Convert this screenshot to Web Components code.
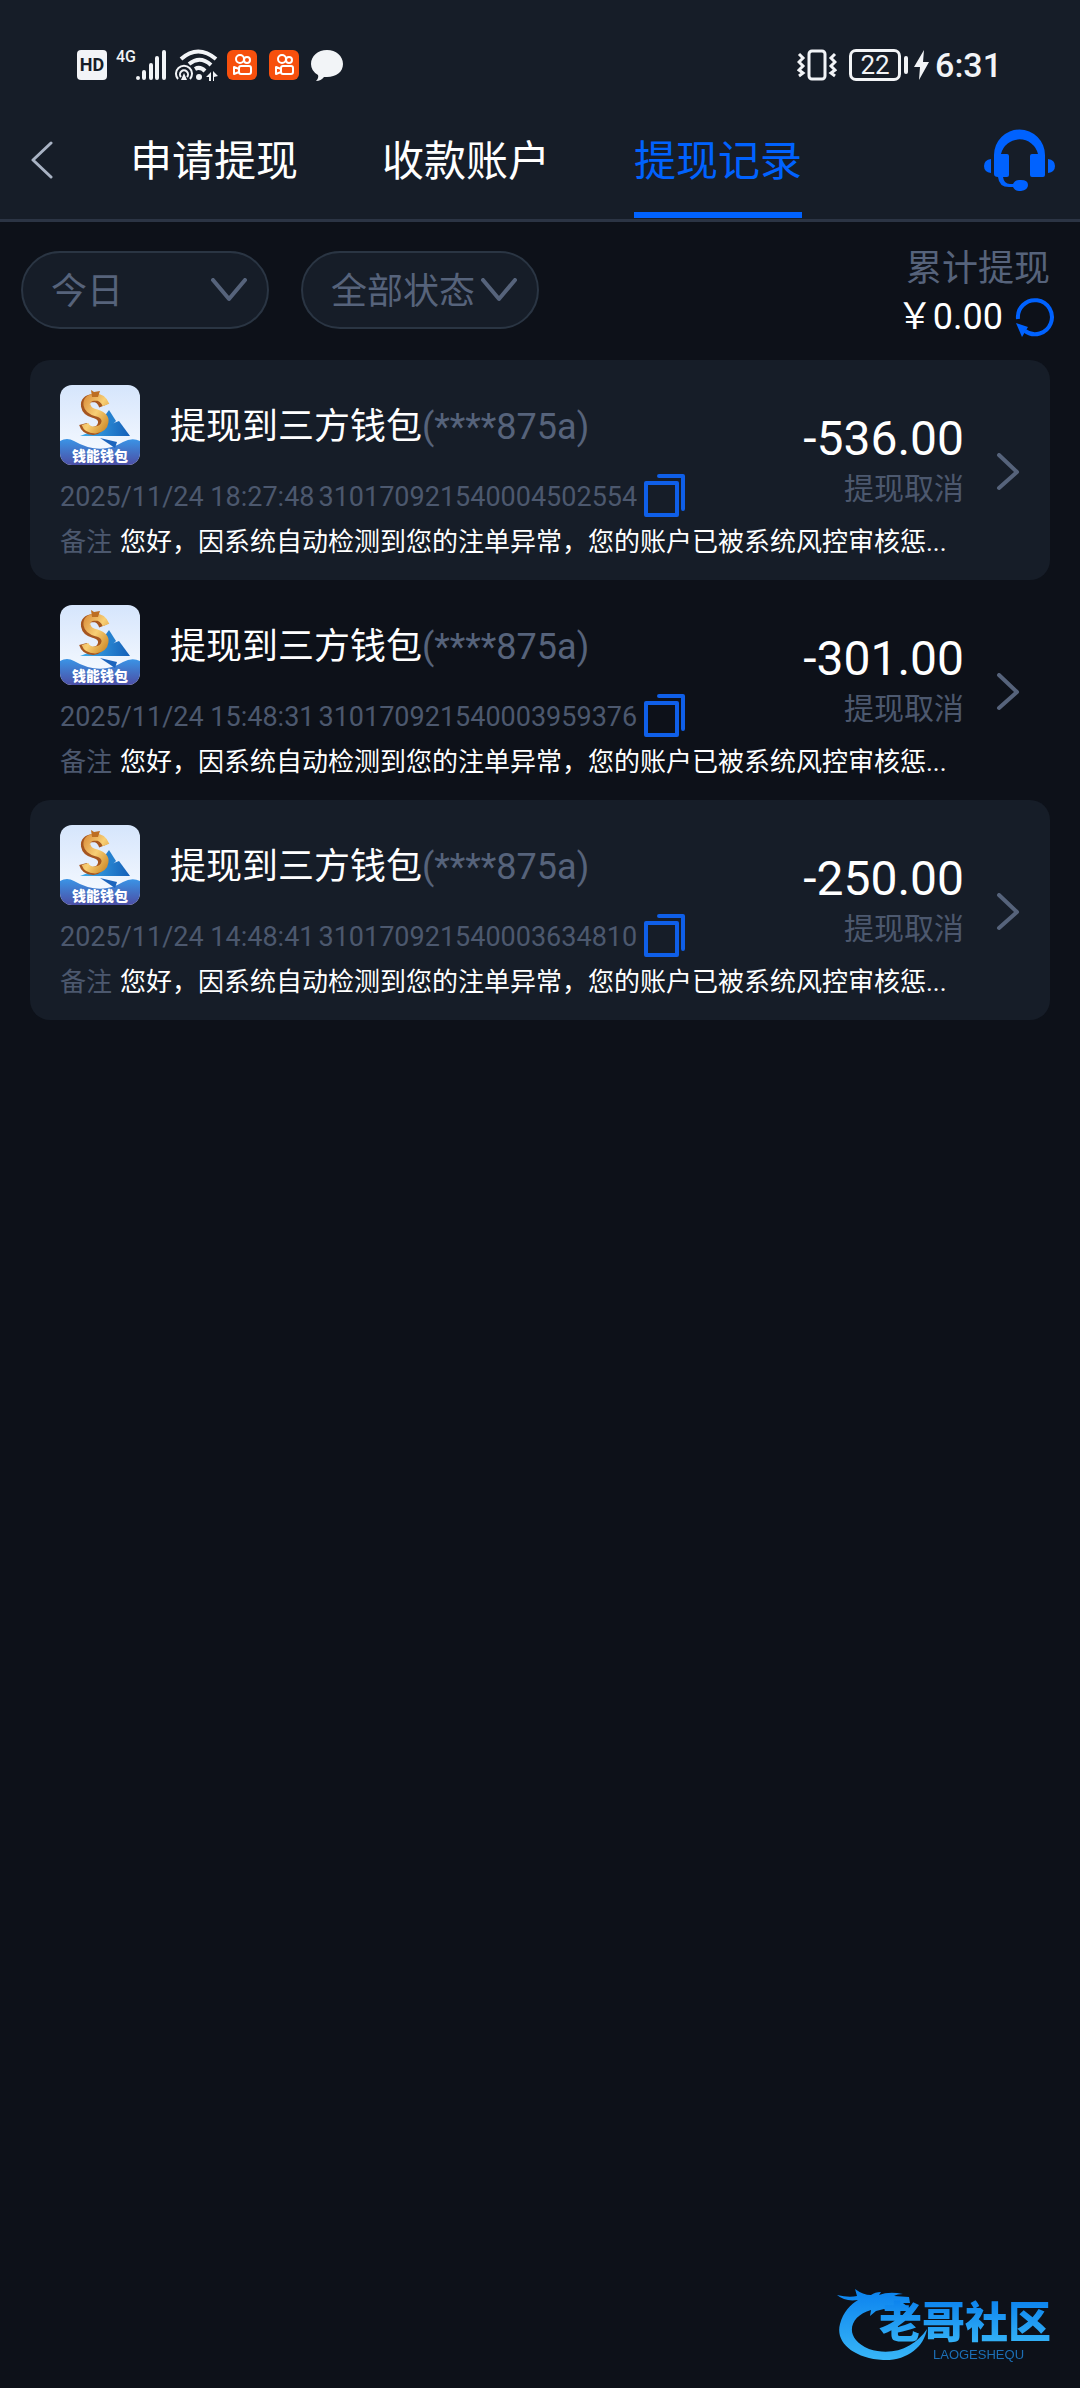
<!DOCTYPE html>
<html lang="zh-CN">
<head>
<meta charset="UTF-8">
<meta name="viewport" content="width=device-width, initial-scale=1.0">
<title>提现记录</title>
<style>
  :root {
    --bg: #0d1119;
    --panel: #161d28;
    --line: #2b3444;
    --muted: #56637b;
    --dim: #4c586e;
    --primary: #0062ff;
  }
  body {
    margin: 0;
    min-height: 100vh;
    background: var(--bg);
    color: #fff;
    font-family: Roboto, "Noto Sans CJK SC", sans-serif;
  }
</style>
</head>
<body>
<withdraw-page></withdraw-page>

<script>
// 手机状态栏
class StatusBar extends HTMLElement {
  constructor() {
    super();
    const shadowRoot = this.attachShadow({ mode: "open" });

    const styles = `
      :host {
        display: flex;
        justify-content: space-between;
        align-items: center;
        height: 34px;
        padding: 48px 78px 22px 77px;
        color: #f2f4f7;
      }
      .group, .apps { display: flex; align-items: center; }
      .group { gap: 9px; }
      .apps { gap: 12px; }
      .right { gap: 6px; }
      .hd {
        width: 30px;
        height: 30px;
        border-radius: 4px;
        background: #f2f4f7;
        color: var(--panel);
        font-size: 18px;
        font-weight: 700;
        line-height: 30px;
        text-align: center;
      }
      .signal { display: flex; align-items: flex-start; }
      .net { font-size: 16px; line-height: 16px; font-weight: 500; }
      .power { display: flex; align-items: center; gap: 3px; margin-left: 6px; }
      .battery {
        width: 46px;
        height: 26px;
        border: 3px solid #f2f4f7;
        border-radius: 7px;
        font-size: 26px;
        line-height: 26px;
        text-align: center;
      }
      .nub { width: 4px; height: 18px; border-radius: 2px; background: #f2f4f7; }
      .time { font-size: 34px; line-height: 34px; font-weight: 500; }
      svg { display: block; }
    `;

    // 快手图标出现两次
    const kuai = `
      <svg width="30" height="30" viewBox="0 0 30 30">
        <rect width="30" height="30" rx="6" fill="#f7500d"/>
        <g fill="none" stroke="#fff" stroke-width="2" stroke-linejoin="round">
          <circle cx="13" cy="9" r="4"/>
          <circle cx="20" cy="10" r="3"/>
          <rect x="12" y="16" width="12" height="8" rx="2"/>
          <path d="M12 19 7 17v7l5-2"/>
        </g>
      </svg>`;

    shadowRoot.innerHTML = `
      <style>${styles}</style>
      <div class="group">
        <span class="hd">HD</span>
        <div class="signal">
          <span class="net">4G</span>
          <svg width="30" height="32" viewBox="2 0 30 32" stroke="#f2f4f7" stroke-width="4" stroke-linecap="round">
            <path d="M4 29v0M10 23v6M17 16v13M23 9v20M30 3v26"/>
          </svg>
        </div>
        <svg width="43" height="32" viewBox="0 0 43 32" fill="none" stroke="#f2f4f7">
          <g stroke-width="4">
            <path d="M6 10Q23-5 41 10"/>
            <path d="M14 15Q25 6 36 16"/>
            <path d="M20 20q5-3 10 2" />
          </g>
          <circle cx="24" cy="28" r="3" fill="#f2f4f7" stroke="none"/>
          <g stroke-width="2">
            <path d="M3 30a8 8 0 1 1 12 0"/>
            <path d="M6 28a4 4 0 1 1 6 0"/>
          </g>
          <path d="M9 24l3 7H6zM31 28l5-5v9h-2v-4zM38 22v10h1v-4l4-1z" fill="#f2f4f7" stroke="none"/>
        </svg>
        <div class="apps">
          ${kuai}
          ${kuai}
          <svg width="32" height="31" viewBox="0 0 32 31" fill="#f2f4f7">
            <path d="M16 0c9 0 16 6 16 14s-7 13-16 13q-2 0-3 0-3 4-8 4 3-3 2-6Q0 21 0 14C0 6 7 0 16 0z"/>
          </svg>
        </div>
      </div>
      <div class="group right">
        <svg width="40" height="32" viewBox="0 0 40 32" fill="none" stroke="#f2f4f7" stroke-width="3">
          <rect x="12" y="2" width="16" height="28" rx="3"/>
          <path d="M2 5l4 4-4 4 4 4-4 4 4 3-4 3M38 5l-4 4 4 4-4 4 4 4-4 3 4 3"/>
        </svg>
        <div class="power">
          <span class="battery">22</span>
          <span class="nub"></span>
        </div>
        <svg width="15" height="30" viewBox="0 0 15 30" fill="#f2f4f7">
          <path d="M10 0 0 17h6L5 30 15 12H9z"/>
        </svg>
        <span class="time">6:31</span>
      </div>
    `;
  }
}
customElements.define("status-bar", StatusBar);

// 顶部导航：返回、选项卡、客服
class NavBar extends HTMLElement {
  constructor() {
    super();
    const shadowRoot = this.attachShadow({ mode: "open" });

    const styles = `
      :host {
        display: flex;
        align-items: center;
        height: 115px;
        padding: 0 25px 0 30px;
        border-bottom: 3px solid var(--line);
      }
      button { padding: 0 0 3px; border: 0; background: none; cursor: pointer; }
      svg { display: block; }
      nav {
        display: flex;
        flex: 1;
        gap: 84px;
        margin-left: 76px;
      }
    `;

    shadowRoot.innerHTML = `
      <style>${styles}</style>
      <button aria-label="返回">
        <svg width="24" height="38" viewBox="0 0 24 38" fill="none" stroke="#a9b3c4" stroke-width="3" stroke-linecap="round" stroke-linejoin="round">
          <path d="M21 2 3 19l18 17"/>
        </svg>
      </button>
      <nav><slot></slot></nav>
      <button aria-label="客服">
        <svg width="71" height="62" viewBox="0 0 71 62" fill="#0062ff">
          <path d="M10 30V26a25 25 0 0 1 51 0v20q0 2-2 2H48q-2 0-2-2V27q0-2 2-2h6A19 19 0 0 0 17 25h6q2 0 2 2v19q0 2-2 2h-4q1 7 7 7h3q2-4 6-4h2q7 0 7 5t-7 6h-2q-4 0-6-4h-4q-10 0-11-10-4 0-4-3z"/>
          <path d="M7 30v14Q0 43 0 37t7-7zM64 30v14q7-1 7-7t-7-7z"/>
        </svg>
      </button>
    `;
  }
}
customElements.define("nav-bar", NavBar);

class NavTab extends HTMLElement {
  constructor() {
    super();
    const shadowRoot = this.attachShadow({ mode: "open" });

    const styles = `
      :host { display: block; }
      a {
        display: block;
        border: 6px solid transparent;
        border-width: 6px 0;
        color: #fff;
        font-size: 42px;
        line-height: 101px;
        text-decoration: none;
        white-space: nowrap;
      }
      :host([active]) a {
        color: var(--primary);
        border-bottom-color: var(--primary);
      }
    `;

    shadowRoot.innerHTML = `
      <style>${styles}</style>
      <a href="#"><slot></slot></a>
    `;
  }
}
customElements.define("nav-tab", NavTab);

// 下拉筛选
class FilterSelect extends HTMLElement {
  constructor() {
    super();
    const shadowRoot = this.attachShadow({ mode: "open" });

    const styles = `
      :host { display: grid; align-items: center; }
      select {
        grid-area: 1 / 1;
        appearance: none;
        box-sizing: border-box;
        width: 100%;
        height: 78px;
        padding: 3px 56px 0 28px;
        border: 2px solid #2a3543;
        border-radius: 39px;
        background: var(--panel);
        color: var(--muted);
        font: inherit;
        font-size: 36px;
      }
      svg {
        grid-area: 1 / 1;
        justify-self: end;
        margin-right: 21px;
        pointer-events: none;
      }
    `;

    shadowRoot.innerHTML = `
      <style>${styles}</style>
      <select aria-label="${this.getAttribute("label")}">
        <option>${this.getAttribute("value")}</option>
      </select>
      <svg width="38" height="24" viewBox="0 0 38 24" fill="none" stroke="#56637b" stroke-width="4" stroke-linecap="round" stroke-linejoin="round">
        <path d="M3 2l16 19L35 2"/>
      </svg>
    `;
  }
}
customElements.define("filter-select", FilterSelect);

// 筛选栏和累计金额
class FilterBar extends HTMLElement {
  constructor() {
    super();
    const shadowRoot = this.attachShadow({ mode: "open" });

    const styles = `
      :host {
        display: flex;
        align-items: flex-start;
        justify-content: space-between;
        padding: 23px 26px 0 21px;
      }
      .filters {
        display: grid;
        grid-template-columns: 248px 238px;
        gap: 32px;
        padding-top: 6px;
      }
      .total { display: flex; flex-direction: column; align-items: flex-end; }
      .label {
        padding-right: 4px;
        color: var(--muted);
        font-size: 36px;
        line-height: 48px;
      }
      .money {
        display: flex;
        align-items: center;
        gap: 12px;
        font-size: 36px;
        line-height: 48px;
      }
      button { padding: 0; border: 0; background: none; cursor: pointer; }
      svg { display: block; }
    `;

    shadowRoot.innerHTML = `
      <style>${styles}</style>
      <div class="filters"><slot></slot></div>
      <div class="total">
        <span class="label">累计提现</span>
        <div class="money">
          <span>￥0.00</span>
          <button aria-label="刷新">
            <svg width="39" height="39" viewBox="0 0 39 39">
              <path d="M3 21A17 17 0 1 1 10 33" fill="none" stroke="#0062ff" stroke-width="4"/>
              <path d="M1 25l12 4-6 10z" fill="#0062ff"/>
            </svg>
          </button>
        </div>
      </div>
    `;
  }
}
customElements.define("filter-bar", FilterBar);

// 钱包图标
class WalletIcon extends HTMLElement {
  constructor() {
    super();
    const shadowRoot = this.attachShadow({ mode: "open" });

    const styles = `
      :host {
        display: block;
        width: 80px;
        height: 80px;
        border-radius: 12px;
        overflow: hidden;
      }
      svg { display: block; }
      text { font: 900 14px "Noto Sans CJK SC", sans-serif; }
    `;

    shadowRoot.innerHTML = `
      <style>${styles}</style>
      <svg width="80" height="80" viewBox="0 0 80 80">
        <defs>
          <linearGradient id="sky" x1="0" y1="0" x2="0" y2="1">
            <stop offset="0" stop-color="#d5e5fc"/>
            <stop offset="1" stop-color="#fafcff"/>
          </linearGradient>
          <linearGradient id="sea" x1="0" y1="0" x2="0" y2="1">
            <stop offset="0" stop-color="#3a94e6"/>
            <stop offset="1" stop-color="#4c4fa6"/>
          </linearGradient>
          <linearGradient id="gold" x1="0" y1="0" x2="1" y2="1">
            <stop offset="0" stop-color="#dc9340"/>
            <stop offset="0.5" stop-color="#f8cf75"/>
            <stop offset="1" stop-color="#cf8c2b"/>
          </linearGradient>
          <linearGradient id="sail" x1="0" y1="0" x2="1" y2="0">
            <stop offset="0" stop-color="#3fb0ee"/>
            <stop offset="1" stop-color="#1560b8"/>
          </linearGradient>
        </defs>
        <rect width="80" height="80" fill="url(#sky)"/>
        <path d="M49 25l7 11-12 12-10-2z" fill="#2580ce"/>
        <path d="M0 56q7-4 14 0 26 15 49 1 9-5 17-1v24H0z" fill="url(#sea)"/>
        <path d="M20 51 59 36l11 15z" fill="url(#sail)"/>
        <path d="M40 53l17 4-2 6z" fill="#1d65bd"/>
        <g fill="none">
          <path d="M43 21q-3-8-10-8-9 1-8 8 1 6 9 8 9 3 8 9-1 7-9 8-8 0-10-7" stroke="#a65620" stroke-width="8"/>
          <path d="M46 20q-3-8-11-8-9 1-8 8 1 6 10 8 9 3 8 9-1 7-10 8-8 0-10-6" stroke="url(#gold)" stroke-width="7"/>
        </g>
        <path d="M31 5l3 2 6-1-2 6h-6z" fill="#bd6e22"/>
        <text x="12" y="76" fill="#fff">钱能钱包</text>
      </svg>
    `;
  }
}
customElements.define("wallet-icon", WalletIcon);

// 单条提现记录
class RecordItem extends HTMLElement {
  constructor() {
    super();
    const shadowRoot = this.attachShadow({ mode: "open" });

    const styles = `
      :host {
        display: grid;
        grid-template-columns: 1fr auto 24px;
        grid-template-rows: 80px 44px 34px;
        row-gap: 8px;
        padding: 25px 30px 21px;
        border-radius: 20px;
      }
      :host(:nth-child(odd)) { background: var(--panel); }
      .title {
        display: flex;
        align-items: center;
        gap: 30px;
        font-size: 36px;
        line-height: 48px;
        white-space: nowrap;
      }
      .name { padding-top: 4px; }
      .account { color: var(--muted); }
      .order {
        display: flex;
        align-items: center;
        gap: 4px;
        color: var(--dim);
        font-size: 27px;
        line-height: 34px;
        white-space: nowrap;
      }
      .order span { padding-top: 4px; }
      .order button { margin-left: 3px; }
      .remark {
        grid-column: 1 / 3;
        display: flex;
        gap: 8px;
        font-size: 26px;
        line-height: 34px;
        white-space: nowrap;
      }
      .remark span:first-child { color: var(--dim); }
      .result {
        grid-area: 1 / 2 / 3 / 3;
        display: flex;
        flex-direction: column;
        justify-content: center;
        align-items: flex-end;
        margin-right: 32px;
        padding-top: 12px;
      }
      .amount { font-size: 48px; line-height: 64px; }
      .state { color: var(--dim); font-size: 30px; line-height: 36px; }
      .more {
        grid-area: 1 / 3 / 4 / 4;
        align-self: center;
      }
      button { padding: 0; border: 0; background: none; cursor: pointer; }
      svg { display: block; }
    `;

    shadowRoot.innerHTML = `
      <style>${styles}</style>
      <div class="title">
        <wallet-icon></wallet-icon>
        <div class="name">提现到三方钱包<span class="account">(****875a)</span></div>
      </div>
      <div class="result">
        <span class="amount">${this.getAttribute("amount")}</span>
        <span class="state">提现取消</span>
      </div>
      <div class="order">
        <span>${this.getAttribute("time")}</span>
        <span>${this.getAttribute("order")}</span>
        <button aria-label="复制">
          <svg width="42" height="44" viewBox="0 0 42 44" fill="none" stroke="#0f5fe8" stroke-width="4" stroke-linejoin="round" stroke-linecap="round">
            <rect x="2" y="10" width="31" height="32"/>
            <path d="M15 3h24v33"/>
          </svg>
        </button>
      </div>
      <div class="remark"><span>备注</span><span><slot></slot></span></div>
      <a class="more" href="#" aria-label="详情">
        <svg width="24" height="38" viewBox="0 0 24 38" fill="none" stroke="#56637b" stroke-width="4" stroke-linecap="round" stroke-linejoin="round">
          <path d="M3 2l18 17L3 35"/>
        </svg>
      </a>
    `;
  }
}
customElements.define("record-item", RecordItem);

// 右下角社区标志
class CommunityLogo extends HTMLElement {
  constructor() {
    super();
    const shadowRoot = this.attachShadow({ mode: "open" });

    const styles = `
      :host {
        position: fixed;
        right: 18px;
        bottom: 26px;
      }
      svg { display: block; }
      .name { font: 900 43px "Liberation Sans", "Noto Sans CJK SC", sans-serif; }
      .latin { font: 13px "Liberation Sans", sans-serif; }
    `;

    shadowRoot.innerHTML = `
      <style>${styles}</style>
      <svg width="225" height="80" viewBox="0 0 225 80">
        <defs>
          <linearGradient id="blue" x1="0" y1="0" x2="0" y2="1">
            <stop offset="0" stop-color="#0b82ee"/>
            <stop offset="1" stop-color="#38b6f7"/>
          </linearGradient>
        </defs>
        <g fill="url(#blue)">
          <path d="M0 13q12 3 20 1l-2-7q8 6 16 6 4-3 10-3l-2 3q10-4 24-1-6 0-9 2l15 1 1 6-7 0 5 4-3 4-9-3q-6 5-12 1l-8 2-6 5 1-6C12 34 6 56 32 67c24 8 46-2 58-20-3 18-20 32-44 31C16 76-2 60 3 42 6 30 14 22 21 18Q8 20 0 13z"/>
          <text class="name" x="42" y="56">老哥社区</text>
        </g>
        <text class="latin" x="96" y="77" fill="#1c6fb5">LAOGESHEQU</text>
      </svg>
    `;
  }
}
customElements.define("community-logo", CommunityLogo);

// 页面
class WithdrawPage extends HTMLElement {
  constructor() {
    super();
    const shadowRoot = this.attachShadow({ mode: "open" });

    const styles = `
      :host { display: block; }
      header { background: var(--panel); }
      main { padding: 19px 30px 0; }
    `;

    const remark = "您好，因系统自动检测到您的注单异常，您的账户已被系统风控审核惩...";

    shadowRoot.innerHTML = `
      <style>${styles}</style>
      <header>
        <status-bar></status-bar>
        <nav-bar>
          <nav-tab>申请提现</nav-tab>
          <nav-tab>收款账户</nav-tab>
          <nav-tab active>提现记录</nav-tab>
        </nav-bar>
      </header>
      <filter-bar>
        <filter-select label="日期" value="今日"></filter-select>
        <filter-select label="状态" value="全部状态"></filter-select>
      </filter-bar>
      <main>
        <record-item amount="-536.00" time="2025/11/24 18:27:48" order="310170921540004502554">${remark}</record-item>
        <record-item amount="-301.00" time="2025/11/24 15:48:31" order="310170921540003959376">${remark}</record-item>
        <record-item amount="-250.00" time="2025/11/24 14:48:41" order="310170921540003634810">${remark}</record-item>
      </main>
      <community-logo></community-logo>
    `;
  }
}
customElements.define("withdraw-page", WithdrawPage);
</script>
</body>
</html>
